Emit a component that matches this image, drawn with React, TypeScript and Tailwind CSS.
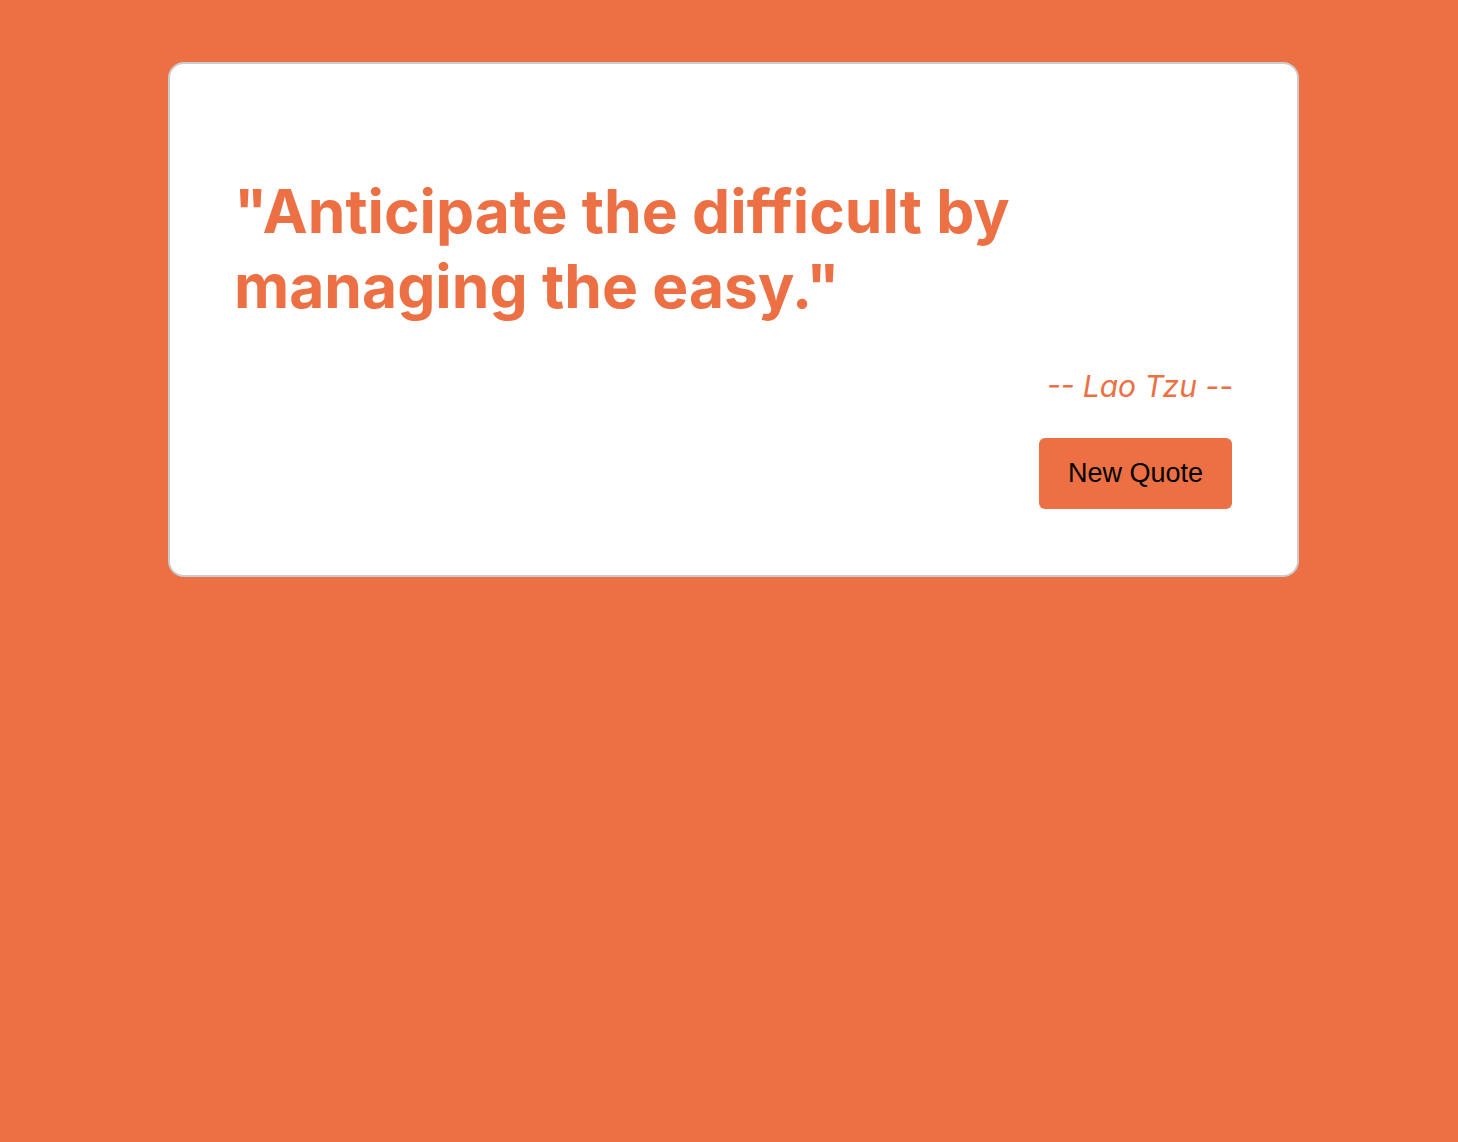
export default function App() {
  return (
    <div className="min-h-[1142px] w-full bg-[#ec7043] pt-[62px]">
      <div className="ml-[168px] w-[1131px] rounded-[16px] border-2 border-[#cccccc] bg-white px-16 pt-[110px] pb-[66px]">
        <h1 className="font-['Inter',sans-serif] text-[60.5px] font-bold leading-[75px] text-[#ec7043]">
          "Anticipate the difficult by
          <br />
          managing the easy."
        </h1>
        <p className="mt-[44px] text-right font-['Inter',sans-serif] text-[30px] italic leading-[36px] text-[#ec7043]">
          -- Lao Tzu --
        </p>
        <div className="mt-[34px] flex justify-end pr-px">
          <button className="h-[71px] w-[193px] rounded-[6px] bg-[#ec7043] font-['Liberation_Sans',Arial,sans-serif] text-[27px] text-black">
            New Quote
          </button>
        </div>
      </div>
    </div>
  );
}
